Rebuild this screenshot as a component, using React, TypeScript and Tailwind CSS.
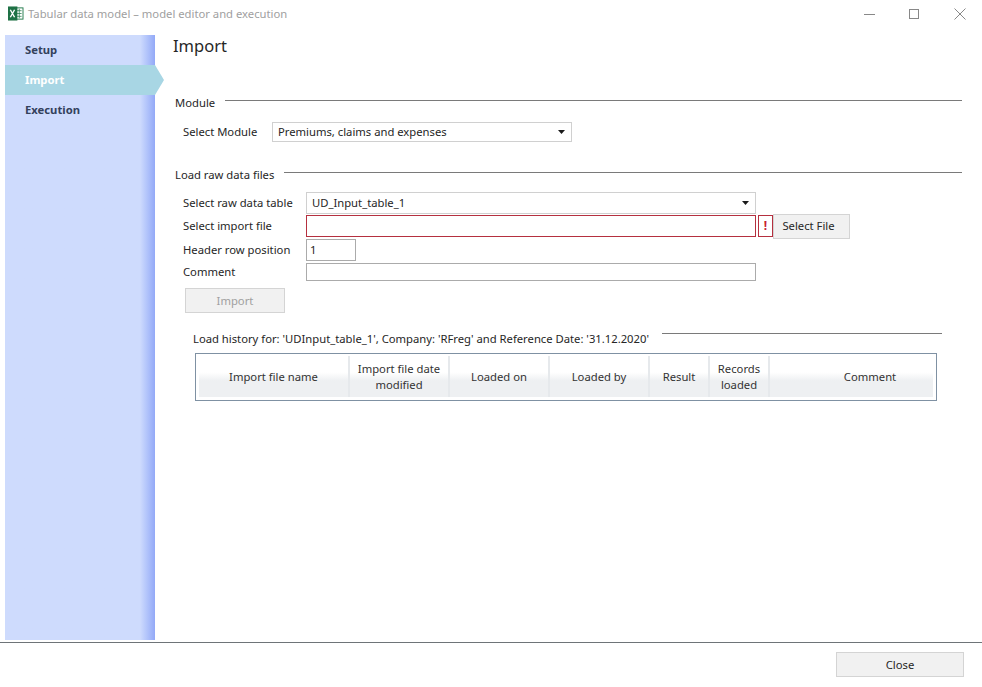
import React from "react";

const font = { fontFamily: '"Noto Sans", "Open Sans", sans-serif' };

function GroupTitle({ label, className }: { label: string; className?: string }) {
  return (
    <div className={"flex items-start h-[12px] " + (className ?? "")}>
      <span className="text-[11.25px] leading-[16px] text-[#262626] mt-[-5px] whitespace-nowrap">{label}</span>
      <div className="flex-1 h-px bg-[#7a7a7a] ml-[10px]" />
    </div>
  );
}

function Caret() {
  return (
    <svg width="7" height="4" viewBox="0 0 7 4" className="shrink-0">
      <path d="M0 0h7L3.5 4z" fill="#1a1a1a" />
    </svg>
  );
}

const Column = ({ w, children }: { w: string; children: React.ReactNode }) => (
  <div className={w + " shrink-0 h-full flex items-center justify-center text-center pt-px text-[11.25px] leading-[16px] text-[#333] border-r-2 border-[#e6e9ec] last:border-r-0"}>
    {children}
  </div>
);

export default function App() {
  return (
    <div style={font} className="w-[982px] h-[687px] bg-white flex flex-col overflow-hidden text-[#262626]">
      {/* Title bar */}
      <div className="h-[35px] shrink-0 flex items-start">
        <svg width="17" height="15" viewBox="0 0 17 16" className="ml-[7px] mt-[6px] shrink-0">
          <rect x="8" y="2" width="8.5" height="12" fill="#fff" stroke="#21794a" strokeWidth="1" />
          <path d="M10 5h5M10 8h5M10 11h5M12.5 3v10" stroke="#21794a" strokeWidth="0.8" />
          <rect x="0.5" y="0.5" width="10" height="15" fill="#1e7145" />
          <path d="M3 4l4.5 8M7.5 4L3 12" stroke="#fff" strokeWidth="1.5" />
        </svg>
        <span className="ml-[4px] mt-[6px] text-[11.25px] leading-[16px] text-[#a0a0a0]">Tabular data model – model editor and execution</span>
        <div className="ml-auto flex items-center mt-[8px] mr-[16px]">
          <div className="w-[11px] h-px bg-[#888]" />
          <div className="w-[10px] h-[10px] border border-[#888] ml-[34px]" />
          <svg width="12" height="12" viewBox="0 0 12 12" className="ml-[35px]">
            <path d="M0.5 0.5l11 11M11.5 0.5l-11 11" stroke="#888" strokeWidth="1" />
          </svg>
        </div>
      </div>

      {/* Body */}
      <div className="flex h-[607px] shrink-0 pl-[5px]">
        <div className="w-[150px] h-[605px] shrink-0 bg-gradient-to-r from-[#cedbfd] from-[90%] to-[#93a9f7] flex flex-col">
          <div className="h-[30px] flex items-center pl-[20px] pt-px text-[11.25px] font-bold text-[#33415c]">Setup</div>
          <div className="h-[30px] relative flex items-center pl-[20px] pt-px text-[11.25px] font-bold text-white bg-[#a8d6e4] w-[150px]">
            Import
            <div className="absolute left-[150px] top-0 w-0 h-0 border-y-[15px] border-y-transparent border-l-[9px] border-l-[#a8d6e4]" />
          </div>
          <div className="h-[30px] flex items-center pl-[20px] pt-px text-[11.25px] font-bold text-[#33415c]">Execution</div>
        </div>

        <div className="flex-1 pl-[18px] flex flex-col">
          <div className="text-[16.5px] leading-[24px] text-[#262626] mt-[-1px] h-[66px]">Import</div>

          <GroupTitle label="Module" className="ml-[2px] mr-[20px]" />
          <div className="flex items-center ml-[10px] mt-[10px] h-[20px]">
            <span className="w-[89px] text-[11.25px]">Select Module</span>
            <div className="w-[300px] h-[20px] border border-[#d0d0d0] flex items-center justify-between pl-[5px] pr-[6px] text-[11.25px]">
              <span>Premiums, claims and expenses</span>
              <Caret />
            </div>
          </div>

          <GroupTitle label="Load raw data files" className="ml-[2px] mr-[20px] mt-[30px]" />

          <div className="ml-[10px] mt-[8px] flex flex-col">
            <div className="flex items-center h-[22px]">
              <span className="w-[123px] pt-px text-[11.25px] whitespace-nowrap">Select raw data table</span>
              <div className="w-[450px] h-[22px] border border-[#d0d0d0] flex items-center justify-between pl-[5px] pr-[6px] text-[11.25px]">
                <span className="pt-px">UD_Input_table_1</span>
                <Caret />
              </div>
            </div>
            <div className="flex items-center h-[22px] mt-px">
              <span className="w-[123px] pt-px text-[11.25px]">Select import file</span>
              <div className="w-[450px] h-[22px] border border-[#b5303f]" />
              <div className="relative ml-[2px] w-[15px] h-[22px] border border-[#b5303f] flex items-center justify-center text-[12px] font-bold text-[#c8202f] z-10">!</div>
              <div className="w-[77px] h-[25px] border border-[#d4d4d4] bg-[#f1f1f1] flex items-center justify-center pt-px pr-[6px] text-[11.25px]">Select File</div>
            </div>
            <div className="flex items-center h-[22px] mt-[2px]">
              <span className="w-[123px] pt-px text-[11.25px]">Header row position</span>
              <div className="w-[50px] h-[22px] border border-[#ababab] flex items-center pl-[3px] pt-px text-[11.25px]">1</div>
            </div>
            <div className="flex items-center h-[18px] mt-[2px]">
              <span className="w-[123px] pt-px text-[11.25px]">Comment</span>
              <div className="w-[450px] h-[18px] border border-[#ababab]" />
            </div>
            <div className="w-[100px] h-[25px] ml-[2px] mt-[7px] border border-[#d4d4d4] bg-[#f1f1f1] flex items-center justify-center pt-px text-[11.25px] text-[#a0a0a0]">Import</div>
          </div>

          <div className="flex items-start ml-[20px] mr-[40px] mt-[20px] h-[20px]">
            <span className="text-[11.25px] leading-[16px] mt-[-2px] whitespace-nowrap">Load history for: 'UDInput_table_1', Company: 'RFreg' and Reference Date: '31.12.2020'</span>
            <div className="flex-1 h-px bg-[#7a7a7a] ml-[13px]" />
          </div>

          <div className="ml-[22px] w-[742px] h-[48px] border border-[#7f91a3] px-[3px] pt-[2px] pb-[3px]">
            <div className="h-full flex overflow-hidden bg-gradient-to-b from-white from-40% to-[#eef0f2] to-60%">
              <Column w="w-[151px]">Import file name</Column>
              <Column w="w-[100px]">Import file date<br />modified</Column>
              <Column w="w-[100px]">Loaded on</Column>
              <Column w="w-[100px]">Loaded by</Column>
              <Column w="w-[60px]">Result</Column>
              <Column w="w-[60px]">Records<br />loaded</Column>
              <Column w="w-[200px]">Comment</Column>
            </div>
          </div>
        </div>
      </div>

      {/* Footer */}
      <div className="h-[45px] shrink-0 border-t border-[#6e7478] flex items-start justify-end pr-[18px] pt-[9px]">
        <div className="w-[128px] h-[25px] border border-[#d4d4d4] bg-[#f1f1f1] flex items-center justify-center pt-px text-[11.25px]">Close</div>
      </div>
    </div>
  );
}
